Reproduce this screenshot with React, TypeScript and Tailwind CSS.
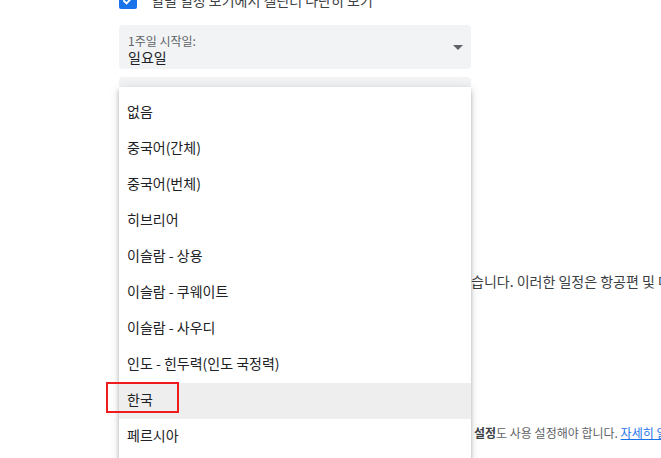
const font = { fontFamily: '"Noto Sans CJK KR", "Noto Sans", sans-serif' }

const options = [
  '없음',
  '중국어(간체)',
  '중국어(번체)',
  '히브리어',
  '이슬람 - 상용',
  '이슬람 - 쿠웨이트',
  '이슬람 - 사우디',
  '인도 - 힌두력(인도 국정력)',
  '한국',
  '페르시아',
]

function Arrow() {
  return (
    <svg width="10" height="5" viewBox="0 0 10 5" className="shrink-0">
      <path d="M0 0 L10 0 L5 5 Z" fill="#5f6368" />
    </svg>
  )
}

export default function App() {
  return (
    <div className="relative w-[661px] h-[458px] overflow-hidden bg-white text-[#3c4043]" style={font}>
      {/* settings page underneath */}
      <div className="pl-[119px]">
        <div className="flex items-center gap-[14px] -mt-[10px] h-5 whitespace-nowrap">
          <div className="w-[18px] h-[18px] rounded-[2px] bg-[#1a73e8] flex items-center justify-center">
            <svg width="14" height="14" viewBox="0 0 24 24">
              <path d="M4 12.5 L9.5 18 L20 6.5" fill="none" stroke="white" strokeWidth="3.2" />
            </svg>
          </div>
          <span className="text-[14px]">일별 일정 보기에서 캘린더 나란히 보기</span>
        </div>

        <div className="mt-[15px] w-[352px] h-[44px] rounded-[4px] bg-[#f1f3f4] flex items-center pl-[9px] pr-[8px]">
          <div className="flex-1 flex flex-col leading-none pt-[5px]">
            <span className="text-[12px] text-[#5f6368] leading-[14px]">1주일 시작일:</span>
            <span className="text-[14px] text-[#202124] leading-[18px]">일요일</span>
          </div>
          <Arrow />
        </div>

        <div className="mt-[8px] w-[352px] h-[44px] rounded-[4px] bg-[#f1f3f4]" />

        <p className="mt-[150px] h-5 leading-5 text-[14px] whitespace-nowrap">
          <span className="inline-block w-[352px] h-5 overflow-hidden align-top">Gmail에서 받은 일정을 캘린더에 자동으로 추가할 수 있</span>
          습니다. 이러한 일정은 항공편 및 다른 예약 정보를 포함합니다.
        </p>

        <p className="mt-[132px] h-5 leading-5 text-[12px] text-[#5f6368] whitespace-nowrap">
          <span className="inline-block w-[355px] h-5 overflow-hidden align-top">이 기능을 사용하려면 Gmail의 스마트 기능 및 맞춤형 기능 맞춤</span>
          <b className="font-semibold text-[#3c4043]">설정</b>도 사용 설정해야 합니다.{' '}
          <a className="text-[#1a73e8] underline">자세히 알아보기</a>
        </p>
      </div>

      {/* open dropdown menu */}
      <div className="absolute left-[119px] top-[87px] w-[352px] h-[400px] bg-white pt-[8px] shadow-[0_4px_5px_0_rgba(0,0,0,0.14),0_1px_10px_0_rgba(0,0,0,0.12),0_2px_4px_-1px_rgba(0,0,0,0.2)]">
        {options.map((o) => (
          <div
            key={o}
            className={`h-[36px] flex items-center pl-[8px] pb-[4px] text-[14px] text-[#202124] ${o === '한국' ? 'bg-[#eeeeee]' : ''}`}
          >
            {o}
          </div>
        ))}
      </div>

      {/* annotation */}
      <div className="absolute left-[106px] top-[382px] w-[73px] h-[31px] border-2 border-[#ee1c1c]" />
    </div>
  )
}
